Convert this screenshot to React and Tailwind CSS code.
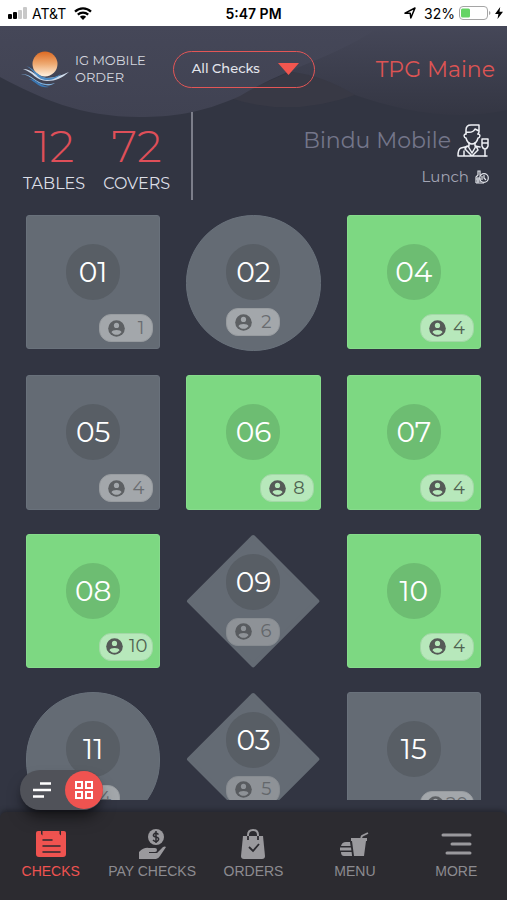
import React from "react";

const TABLES = [
  { no: "01", covers: 1, shape: "square", open: false },
  { no: "02", covers: 2, shape: "circle", open: false },
  { no: "04", covers: 4, shape: "square", open: true },
  { no: "05", covers: 4, shape: "square", open: false },
  { no: "06", covers: 8, shape: "square", open: true },
  { no: "07", covers: 4, shape: "square", open: true },
  { no: "08", covers: 10, shape: "square", open: true },
  { no: "09", covers: 6, shape: "diamond", open: false },
  { no: "10", covers: 4, shape: "square", open: true },
  { no: "11", covers: 4, shape: "circle", open: false },
  { no: "03", covers: 5, shape: "diamond", open: false },
  { no: "15", covers: 20, shape: "square", open: false },
];

function StatusBar() {
  return (
    <div className="grid h-[26px] shrink-0 grid-cols-3 items-center bg-white px-2 font-['Inter',sans-serif] text-[14px] text-black">
      <div className="flex items-center gap-1">
        <svg width="20" height="12" viewBox="0 0 20 12" aria-hidden="true">
          <rect x="0" y="7" width="4" height="5" rx="1" />
          <rect x="5" y="5" width="4" height="7" rx="1" />
          <rect x="10" y="3" width="4" height="9" rx="1" fill="#c8c8c8" />
          <rect x="15" y="0" width="4" height="12" rx="1" fill="#c8c8c8" />
        </svg>
        <span>AT&amp;T</span>
        <svg className="ml-1" width="18" height="13" viewBox="0 0 18 13" aria-hidden="true">
          <path d="M1 4.6a11.6 11.6 0 0 1 16 0M3.8 7.6a7.6 7.6 0 0 1 10.4 0" fill="none" stroke="#000" strokeWidth="2.2" />
          <path d="M9 13 5.9 9.8a4.4 4.4 0 0 1 6.2 0z" />
        </svg>
      </div>
      <div className="text-center font-semibold">5:47 PM</div>
      <div className="-mr-1 flex items-center justify-end gap-1">
        <svg className="mr-1" width="12" height="12" viewBox="0 0 12 12" aria-hidden="true">
          <path d="M1 6.2 11 1 6.8 11 6.2 6.2z" fill="none" stroke="#000" strokeWidth="1.5" strokeLinejoin="round" />
        </svg>
        <span>32%</span>
        <svg width="32" height="14" viewBox="0 0 32 14" aria-hidden="true">
          <rect x="0.5" y="0.5" width="28" height="13" rx="3.5" fill="none" stroke="#a5a5a5" />
          <rect x="2" y="2.5" width="9" height="9" rx="1.5" fill="#65d465" />
          <path d="M30 5v4q1.5-.5 1.5-2T30 5" fill="#a5a5a5" />
        </svg>
        <svg width="8" height="12" viewBox="0 0 8 12" aria-hidden="true">
          <path d="M5.2 0 0 7h3.400L2.500 12 8 4.700H4.500z" />
        </svg>
      </div>
    </div>
  );
}

function Logo() {
  return (
    <svg width="50" height="40" viewBox="0 0 50 40" aria-hidden="true">
      <defs>
        <linearGradient id="sun" x1="0" y1="0" x2="0" y2="1">
          <stop offset="0" stopColor="#dd6a22" />
          <stop offset="0.5" stopColor="#eeaa72" />
          <stop offset="1" stopColor="#fff3e2" />
        </linearGradient>
      </defs>
      <circle cx="25" cy="15" r="12.5" fill="url(#sun)" />
      <path d="M3 20c9 0 13 8 23 9 9 0 16-3 23-6-7 6-13 9-22 9-11 0-14-9-24-12z" fill="#cfdcec" />
      <path d="M6 17c8 2 12 11 21 12 7 0 10-2 14-4-4 4-8 6-14 6C16 31 15 21 6 17z" fill="#4e8cc4" />
      <path d="M1 25c11-1 14 9 25 10 4 0 6 0 9-1-3 2-6 3-10 2-10-1-13-10-24-11z" fill="#7fb0dc" />
      <path d="M9 30c7 0 11 7 20 8-9 2-13-5-20-8z" fill="#3a78b5" />
    </svg>
  );
}

function WaiterIcon() {
  return (
    <svg width="32" height="33" viewBox="0 0 32 33" fill="none" stroke="#eef0f5" strokeWidth="1.5" strokeLinejoin="round" strokeLinecap="round" aria-hidden="true">
      <path d="M9 10V6q0-5 5-5h8v7l-1 2M9 8c5 1 8-1 9-3l4 2" />
      <path d="M9 10c-3 0-2 4 0 4 1 4 3 6 6 6s5-2 6-6c2 0 3-4 0-4" />
      <path d="M12 19v3l-8 2q-3 1-3 8h29M18 19v3l5 1M11 22l4 7 4-7M7 27v5M10 22l-2 3 7 7 6-6-2-4" />
      <path d="M25 15h6v7q-1 3-3 3t-3-3zM25 19h6M28 25v7" />
    </svg>
  );
}

function MealIcon() {
  return (
    <svg width="14" height="14" viewBox="0 0 14 14" fill="none" stroke="#e2e4ea" strokeWidth="1.2" aria-hidden="true">
      <path d="M1 13V7l2-2V1h2v4l1 1M1 9h5M1 13h8M3 7v6M2 11h4" />
      <circle cx="9" cy="8" r="4.300" />
      <path d="M9 5v3l2 2M7 6v4" />
    </svg>
  );
}

function Header() {
  return (
    <header className="relative isolate shrink-0">
      <svg className="absolute inset-x-0 top-0 -z-10 h-[98px] w-full" viewBox="0 0 507 98" preserveAspectRatio="none" aria-hidden="true">
        <defs>
          <linearGradient id="sky" x1="0" y1="0" x2="0" y2="1">
            <stop offset="0" stopColor="#454758" />
            <stop offset="1" stopColor="#404252" />
          </linearGradient>
          <linearGradient id="hill" gradientUnits="userSpaceOnUse" x1="0" y1="0" x2="0" y2="90">
            <stop offset="0" stopColor="#454758" />
            <stop offset="1" stopColor="#343643" />
          </linearGradient>
        </defs>
        <path d="M200 0H507V84C450 96 400 84 355 69 340 65 310 48 290 46z" fill="url(#hill)" />
        <path d="M230 72Q290 92 355 69 320 48 290 46z" fill="#383945" />
        <path d="M0 0H380C340 30 290 40 240 70 200 88 170 91 140 91 80 91 40 72 0 51z" fill="url(#sky)" />
      </svg>
      <div className="flex h-[86px] items-center pl-5 pr-3">
        <h1 className="flex items-center gap-[5px] text-[13px] leading-[17px] text-[#d4d6df]">
          <Logo />
          <span>IG MOBILE<br />ORDER</span>
        </h1>
        <button className="ml-[27px] flex h-[37px] w-[142px] items-center justify-between rounded-full border border-[#e35656] pl-[18px] pr-[15px] text-[13px] font-medium text-[#e4e5ec]">
          All Checks
          <svg width="21" height="12" viewBox="0 0 21 12" aria-hidden="true">
            <path d="M0 0H21L10.500 12z" fill="#f2564f" />
          </svg>
        </button>
        <div className="ml-auto text-[22px] text-[#dc5454]">TPG Maine</div>
      </div>
      <div className="flex h-[103px] items-start justify-between pr-[18px]">
        <div className="flex h-[88px] items-start gap-[18px] border-r-2 border-[#7c7e8a] pl-[23px] pr-[21px] pt-3 text-center">
          {[["12", "TABLES"], ["72", "COVERS"]].map(([n, label]) => (
            <div key={label}>
              <div className="text-[44px] font-light leading-[44px] text-[#df4f59]">{n}</div>
              <div className="mt-[6px] text-[16px] leading-5 text-[#dcdee6]">{label}</div>
            </div>
          ))}
        </div>
        <div className="flex flex-col items-end pt-3">
          <div className="flex items-center gap-[6px] text-[22px] leading-8 text-[#74768a]">
            Bindu Mobile
            <WaiterIcon />
          </div>
          <div className="mt-[10px] flex items-center gap-[6px] text-[15px] leading-5 text-[#a3a5b5]">
            Lunch
            <MealIcon />
          </div>
        </div>
      </div>
    </header>
  );
}

const SHAPE = {
  square: "aspect-square rounded-[3px] border",
  circle: "aspect-[134/136] rounded-full border",
  diamond: "aspect-square",
};

const PILL = {
  open: { box: "border-[#a3d8a7] bg-[#b7e8bb] text-[#4f6351]", icon: "#555a57", face: "#b7e8bb" },
  idle: { box: "border-[#979b9f] bg-[#a3a7ab] text-[#696c70]", icon: "#5d6063", face: "#a3a7ab" },
  faded: { box: "border-[#868b90] bg-[#8e9297] text-[#63676b]", icon: "#585b5f", face: "#8e9297" },
};

function TableTile({ no, covers, shape, open }) {
  const square = shape === "square";
  const diamond = shape === "diamond";
  const colour = diamond ? "" : open ? "border-[#87dc8c] bg-[#7dd882]" : "border-[#69717b] bg-[#646b74]";
  const pill = open ? PILL.open : diamond ? PILL.faded : PILL.idle;
  return (
    <button className={`grid w-full ${SHAPE[shape]} ${colour}`}>
      {diamond && (
        <svg className="col-start-1 row-start-1 h-full w-full" viewBox="0 0 134 134" aria-hidden="true">
          <path d="M67 3 131 67 67 131 3 67z" fill="#646b74" stroke="#646b74" strokeWidth="4" strokeLinejoin="round" />
        </svg>
      )}
      <span className={`col-start-1 row-start-1 flex flex-col items-center ${diamond ? "pt-5" : "pt-7"}`}>
        <span className={`flex h-14 w-[54px] items-center justify-center rounded-full text-[28px] text-white ${open ? "bg-[#6dbd72]" : "bg-[#585e65]"}`}>
          {no}
        </span>
        <span className={`flex h-7 w-[54px] items-center justify-between rounded-[12px] border text-[18px] ${covers > 9 ? "pl-[6px] pr-[5px]" : "pl-2 pr-2"} ${square ? "mr-[6px] mt-[14px] self-end" : "mt-2"} ${pill.box}`}>
          <svg width="17" height="17" viewBox="0 0 17 17" aria-hidden="true">
            <circle cx="8.5" cy="8.5" r="8.300" fill={pill.icon} />
            <circle cx="8.5" cy="5.400" r="2.600" fill={pill.face} />
            <path d="M3.500 12.200C4 9.300 13 9.300 13.500 12.200 11 15.600 6 15.600 3.500 12.200z" fill={pill.face} />
          </svg>
          {covers}
        </span>
      </span>
    </button>
  );
}

function ViewSwitch() {
  return (
    <div className="absolute bottom-[90px] left-5 flex h-10 w-[83px] items-center justify-between rounded-full bg-[#505259] pl-3 shadow-lg shadow-black/50">
      <button aria-label="List view">
        <svg width="20" height="18" viewBox="0 0 20 18" aria-hidden="true">
          <path d="M8 2.500h11M1 9h18M1 15.500h11" stroke="#fff" strokeWidth="2.400" />
        </svg>
      </button>
      <button aria-label="Grid view" className="flex h-[38px] w-[38px] items-center justify-center rounded-full bg-[#ef5350]">
        <svg width="20" height="20" viewBox="0 0 20 20" fill="none" stroke="#fff" strokeWidth="2" aria-hidden="true">
          <path d="M2 2h6v6H2zM12 2h6v6h-6zM2 12h6v6H2zM12 12h6v6h-6z" />
        </svg>
      </button>
    </div>
  );
}

const NAV = [
  {
    label: "CHECKS",
    icon: (
      <>
        <path d="M1 5q0-2 2-2h3v3l1.500 1.500V3h17v3L26 7.500V3h3q2 0 2 2v21q0 3-3 3H4q-3 0-3-3z" />
        <path d="M8 12h9M8 18h17M8 24h17" stroke="#2c2b30" strokeWidth="1.5" strokeLinecap="round" />
      </>
    ),
  },
  {
    label: "PAY CHECKS",
    icon: (
      <>
        <circle cx="20" cy="9" r="8" />
        <path d="M22.500 6.500Q20 4 18 6t2 3 2 3.500-5-.5M20 3v12" fill="none" stroke="#2c2b30" strokeWidth="1.5" />
        <path d="M3 24q5-5 10-4h6q2 0 2 2t-2 2h-6v1h8l6-6q2-1 3 0l-6 9q-2 3-4 3H3z" />
      </>
    ),
  },
  {
    label: "ORDERS",
    icon: (
      <>
        <path d="M6 8h20l2 20q0 3-3 3H7q-3 0-3-3z" />
        <path d="M11 11V7q0-5 5-5t5 5v4" fill="none" stroke="#9a999d" strokeWidth="2" />
        <path d="M11 8v4M21 8v4M12 19l4 4 6-7" fill="none" stroke="#2c2b30" strokeWidth="1.800" />
      </>
    ),
  },
  {
    label: "MENU",
    icon: (
      <>
        <path d="M12 10h16v3h-1l-2 15H15l-2-15h-1z" />
        <path d="M22 10l1-2 6-3" fill="none" stroke="#9a999d" strokeWidth="1.800" />
        <path d="M2 18q1-4 5-4h4l.6 4zM1 19.500h11l.4 3H1zM2 24h10.600l.5 4H5q-3 0-3-4z" />
      </>
    ),
  },
  {
    label: "MORE",
    icon: <path d="M3 7h27M12 16h18M7 25h23" fill="none" stroke="#9a999d" strokeWidth="3" strokeLinecap="round" />,
  },
];

function BottomNav() {
  return (
    <nav className="grid h-[88px] shrink-0 grid-cols-5 rounded-t-md bg-[#2c2b30] pt-4 shadow-[0_-2px_4px_#24262f]">
      {NAV.map(({ label, icon }, i) => (
        <a key={label} href="#" className={`flex flex-col items-center gap-px whitespace-nowrap font-['Liberation_Sans',sans-serif] text-[14px] leading-5 ${i === 0 ? "text-[#ef5350]" : "text-[#8c8b90]"}`}>
          <svg width="32" height="32" viewBox="0 0 32 32" fill={i === 0 ? "#ef5350" : "#9a999d"} aria-hidden="true">{icon}</svg>
          {label}
        </a>
      ))}
    </nav>
  );
}

export default function App() {
  return (
    <div className="relative flex h-screen flex-col bg-[#323542] font-['Montserrat','Inter',sans-serif]">
      <StatusBar />
      <Header />
      <main className="mb-3 min-h-0 flex-1 overflow-hidden">
        <div className="grid grid-cols-3 items-start gap-x-[26px] gap-y-6 px-[26px]">
          {TABLES.map((t) => (
            <TableTile key={t.no} {...t} />
          ))}
        </div>
      </main>
      <BottomNav />
      <ViewSwitch />
    </div>
  );
}
